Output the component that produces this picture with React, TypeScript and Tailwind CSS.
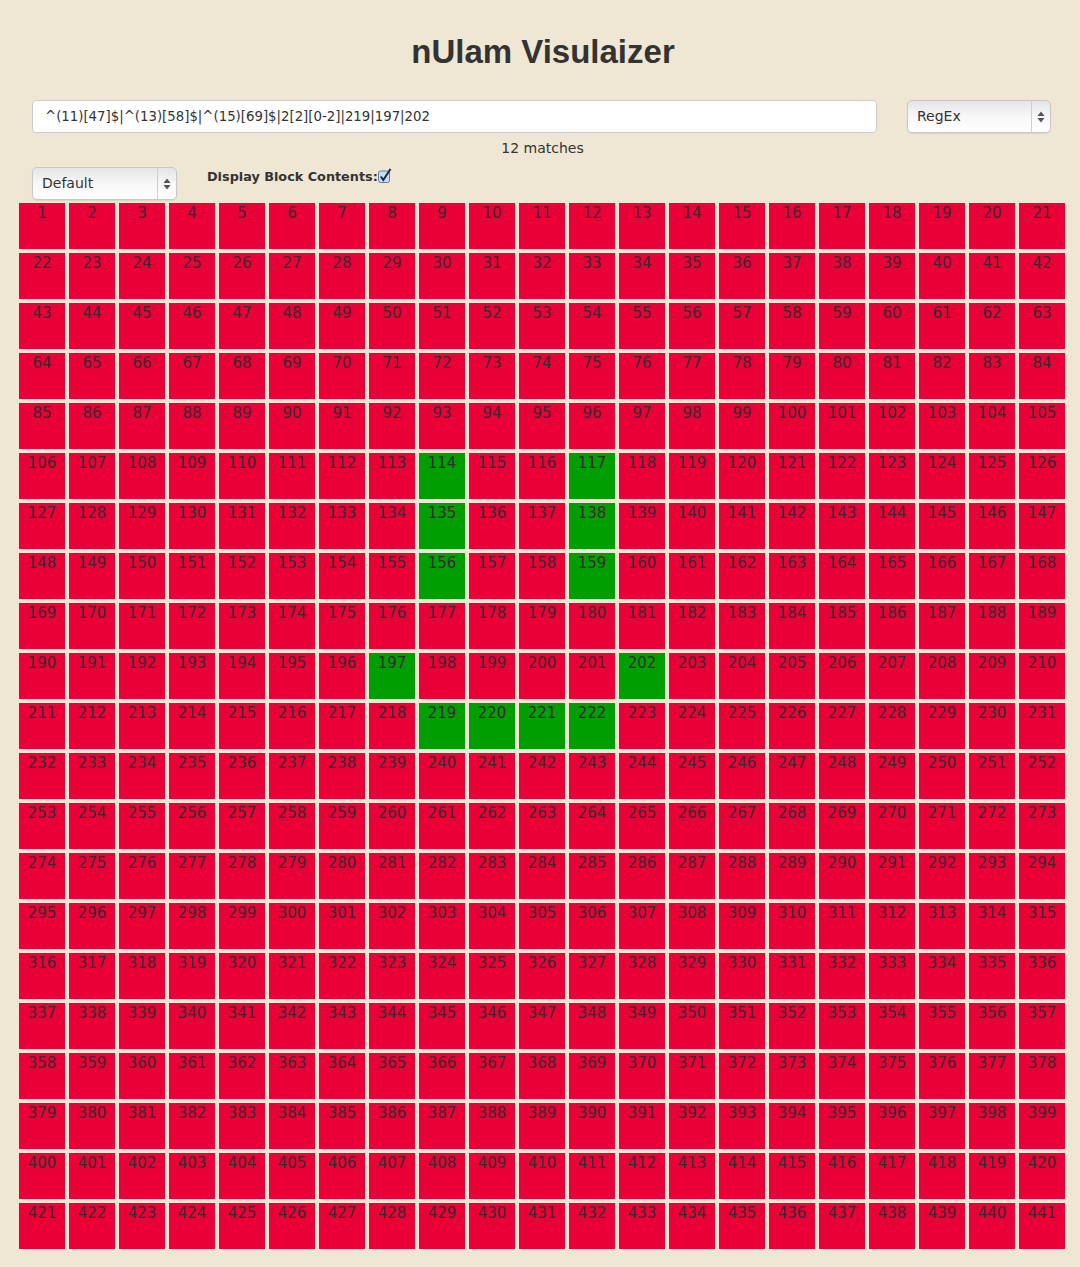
import React from "react";

const matches = new Set([114, 117, 135, 138, 156, 159, 197, 202, 219, 220, 221, 222]);

function Arrows() {
  return (
    <svg width="8" height="12" viewBox="0 0 8 12">
      <path d="M4 0.5 L7.5 5 L0.5 5 Z" fill="#555" />
      <path d="M4 11.5 L7.5 7 L0.5 7 Z" fill="#555" />
    </svg>
  );
}

function FakeSelect({ label, width }: { label: string; width: string }) {
  return (
    <div
      className={`${width} h-[33px] flex items-stretch rounded-[5px] border border-[#c8c8c8] bg-[linear-gradient(to_bottom,#e4e4e4_0%,#f6f6f6_45%,#ffffff_100%)] shadow-[0_1px_1px_rgba(0,0,0,0.08)]`}
    >
      <div className="flex-1 flex items-center pl-[9px] text-[14px] text-[#333] font-['DejaVu_Sans',sans-serif]">
        {label}
      </div>
      <div className="w-[19px] border-l border-[#cfcfcf] flex items-center justify-center">
        <Arrows />
      </div>
    </div>
  );
}

export default function App() {
  const nums = Array.from({ length: 441 }, (_, i) => i + 1);
  return (
    <div className="min-h-[1267px] w-full bg-[#efe7d4] text-[#333]">
      <h1 className="pt-[33px] pl-[6px] text-center text-[33px] font-bold leading-[38px] font-['Liberation_Sans',Arial,sans-serif] text-[#333]">
        nUlam Visulaizer
      </h1>
      <div className="mt-[29px] flex pl-[32px] gap-[30px]">
        <div className="w-[845px] h-[33px] rounded-[4px] border border-[#cccccc] bg-white flex items-center pl-[12px] text-[13.3px] text-[#333] font-['DejaVu_Sans',sans-serif]">
          ^(11)[47]$|^(13)[58]$|^(15)[69]$|2[2][0-2]|219|197|202
        </div>
        <FakeSelect label="RegEx" width="w-[144px]" />
      </div>
      <div className="mt-[7px] pl-[5px] text-center text-[14px] leading-[17px] font-['DejaVu_Sans',sans-serif] text-[#333]">
        12 matches
      </div>
      <div className="mt-[10px] flex items-start pl-[32px]">
        <FakeSelect label="Default" width="w-[145px]" />
        <div className="ml-[30px] mt-[2px] flex items-start">
          <span className="text-[12.8px] leading-[16px] font-bold font-['DejaVu_Sans',sans-serif] text-[#333]">
            Display Block Contents:
          </span>
          <svg width="14" height="15" viewBox="0 0 14 15" className="-mt-[1px]">
            <rect x="0.5" y="3" width="11" height="11.5" rx="2" fill="#c9def5" stroke="#5d7fa6" />
            <path d="M2.8 8.5 L5.3 12 L12.5 1" fill="none" stroke="#1a2a44" strokeWidth="2" />
          </svg>
        </div>
      </div>
      <div className="mt-[3px] ml-[19px] grid grid-cols-[repeat(21,46px)] gap-[4px] pb-[18px]">
        {nums.map((n) => (
          <div
            key={n}
            className={`h-[46px] text-center text-[15px] leading-[20px] font-['DejaVu_Sans',sans-serif] text-[#3a2a30] ${
              matches.has(n) ? "bg-[#009e00]" : "bg-[#e80036]"
            }`}
          >
            {n}
          </div>
        ))}
      </div>
    </div>
  );
}
